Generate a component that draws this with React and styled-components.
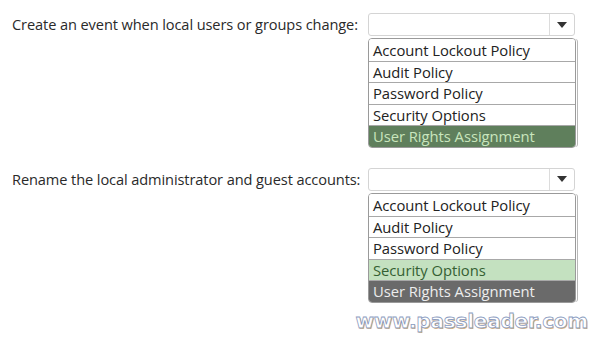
import React from "react";
import styled, { createGlobalStyle } from "styled-components";

const GlobalStyle = createGlobalStyle`
  html, body {
    margin: 0;
    padding: 0;
    background: #fff;
  }
  body {
    font-family: "Open Sans", "Noto Sans", Arial, sans-serif;
  }
`;

const Page = styled.div`
  width: 602px;
  height: 339px;
  box-sizing: border-box;
  padding: 13px 0 0 12px;
  display: flex;
  flex-direction: column;
  gap: 20px;
  position: relative;
  overflow: hidden;
`;

const Question = styled.div`
  display: grid;
  grid-template-columns: 356px 207px;
  align-items: start;
`;

const Label = styled.div`
  font-size: 14.6px;
  letter-spacing: -0.1px;
  color: #2a2a2a;
  height: 23px;
  line-height: 23px;
  white-space: nowrap;
`;

const Picker = styled.div`
  display: flex;
  flex-direction: column;
  gap: 2px;
`;

const Select = styled.div`
  height: 23px;
  box-sizing: border-box;
  border: 1px solid #d4d4d4;
  border-radius: 3px;
  display: flex;
  justify-content: flex-end;
  background: #fff;
`;

const Arrow = styled.div`
  width: 24px;
  border-left: 1px solid #dcdcdc;
  display: flex;
  align-items: center;
  justify-content: center;
  &::after {
    content: "";
    border-left: 5px solid transparent;
    border-right: 5px solid transparent;
    border-top: 6px solid #333;
  }
`;

const List = styled.div`
  border: 1px solid #9a9a9a;
  border-radius: 4px;
  overflow: hidden;
  box-shadow: 2px 0 0 -1px #fff, 3px 0 0 -1px #b8b8b8;
  margin-right: -1px;
`;

const styles = {
  none: { bg: "#fff", fg: "#222" },
  dark: { bg: "#5f7f5c", fg: "#c9e6bd" },
  light: { bg: "#c4e1c0", fg: "#355f33" },
  gray: { bg: "#6a6a6a", fg: "#ededed" },
};

const Item = styled.div`
  height: 21.6px;
  line-height: 21px;
  box-sizing: border-box;
  padding-left: 4px;
  font-size: 14.8px;
  letter-spacing: -0.05px;
  white-space: nowrap;
  background: ${(p) => styles[p.$mark].bg};
  color: ${(p) => styles[p.$mark].fg};
  border-top: 1px solid ${(p) => (p.$first ? "transparent" : "#a8a8a8")};
`;

const Watermark = styled.div`
  position: absolute;
  right: 14px;
  bottom: 6px;
  font-family: "DejaVu Sans", sans-serif;
  font-weight: bold;
  font-size: 20px;
  letter-spacing: -0.2px;
  color: #fff;
  -webkit-text-stroke: 0.8px #8a9bc0;
  text-shadow: 1px 1px 0 #edbb78;
`;

const options = [
  "Account Lockout Policy",
  "Audit Policy",
  "Password Policy",
  "Security Options",
  "User Rights Assignment",
];

const questions = [
  {
    label: "Create an event when local users or groups change:",
    marks: { "User Rights Assignment": "dark" },
  },
  {
    label: "Rename the local administrator and guest accounts:",
    marks: { "Security Options": "light", "User Rights Assignment": "gray" },
  },
];

export default function App() {
  return (
    <>
      <GlobalStyle />
      <Page>
        {questions.map((q) => (
          <Question key={q.label}>
            <Label>{q.label}</Label>
            <Picker>
              <Select>
                <Arrow />
              </Select>
              <List>
                {options.map((o, i) => (
                  <Item key={o} $first={i === 0} $mark={q.marks[o] || "none"}>
                    {o}
                  </Item>
                ))}
              </List>
            </Picker>
          </Question>
        ))}
        <Watermark>www.passleader.com</Watermark>
      </Page>
    </>
  );
}
